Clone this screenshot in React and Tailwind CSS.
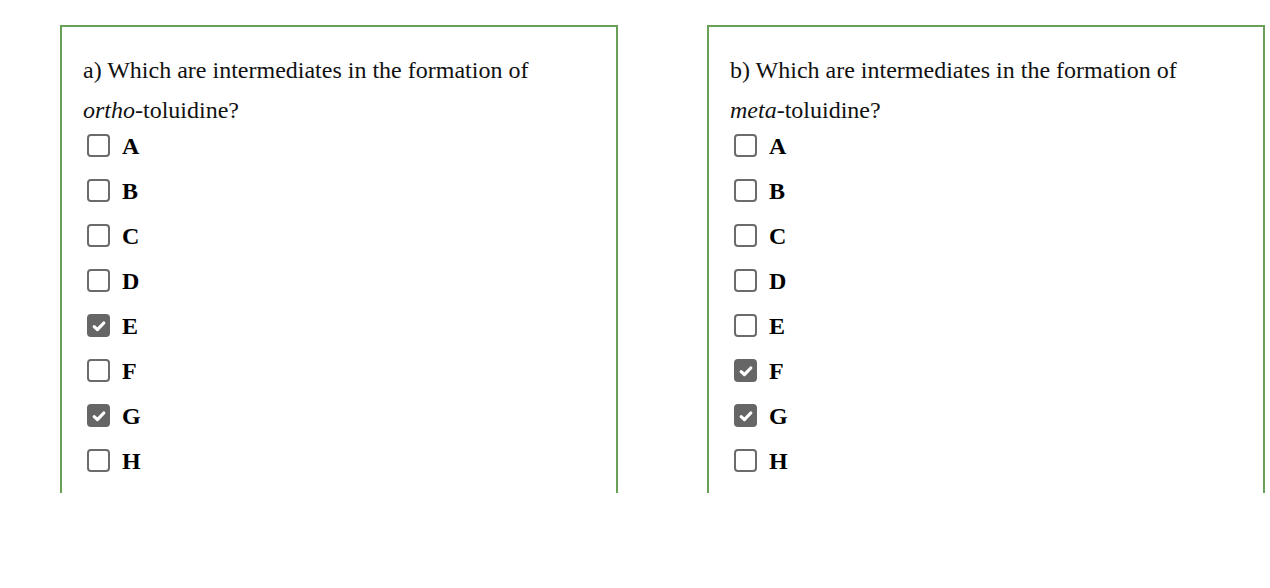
import { useState } from "react";

const LETTERS = ["A", "B", "C", "D", "E", "F", "G", "H"];

const Box = ({ checked, onChange }) => (
  <button
    type="button"
    onClick={onChange}
    className={
      checked
        ? "w-[23px] h-[23px] rounded-[4px] bg-[#666666] flex items-center justify-center shrink-0"
        : "w-[23px] h-[23px] rounded-[4px] border-[2.5px] border-[#6b6b6b] bg-white shrink-0"
    }
  >
    {checked && (
      <svg viewBox="0 0 16 16" className="w-[16px] h-[16px]">
        <path
          d="M3.2 8.6 L6.4 11.6 L12.8 5"
          fill="none"
          stroke="white"
          strokeWidth="3.2"
          strokeLinecap="round"
          strokeLinejoin="round"
        />
      </svg>
    )}
  </button>
);

const Question = ({ label, target, initial }) => {
  const [selected, setSelected] = useState(initial);

  const toggle = (l) =>
    setSelected((s) => (s.includes(l) ? s.filter((x) => x !== l) : [...s, l]));

  return (
    <div className="w-[558px] h-[468px] overflow-hidden shrink-0">
      <div className="border-2 border-b-0 border-[#68a058] h-[520px] pl-[21px] pt-[23px]">
        <p className="text-[24px] leading-[40px] text-[#111]">
          {label}) Which are intermediates in the formation of
          <br />
          <i>{target}</i>-toluidine?
        </p>
        <div className="flex flex-col pl-[4px] -mt-[7px]">
          {LETTERS.map((l) => (
            <label key={l} className="h-[45px] flex items-center gap-[12px] cursor-pointer">
              <Box checked={selected.includes(l)} onChange={() => toggle(l)} />
              <span className="font-bold text-[24px] text-black">{l}</span>
            </label>
          ))}
        </div>
      </div>
    </div>
  );
};

export default function App() {
  return (
    <div
      className="w-[1270px] h-[588px] bg-white pl-[60px] pt-[25px] flex gap-[89px]"
      style={{ fontFamily: '"Liberation Serif", "Times New Roman", serif' }}
    >
      <Question label="a" target="ortho" initial={["E", "G"]} />
      <Question label="b" target="meta" initial={["F", "G"]} />
    </div>
  );
}
